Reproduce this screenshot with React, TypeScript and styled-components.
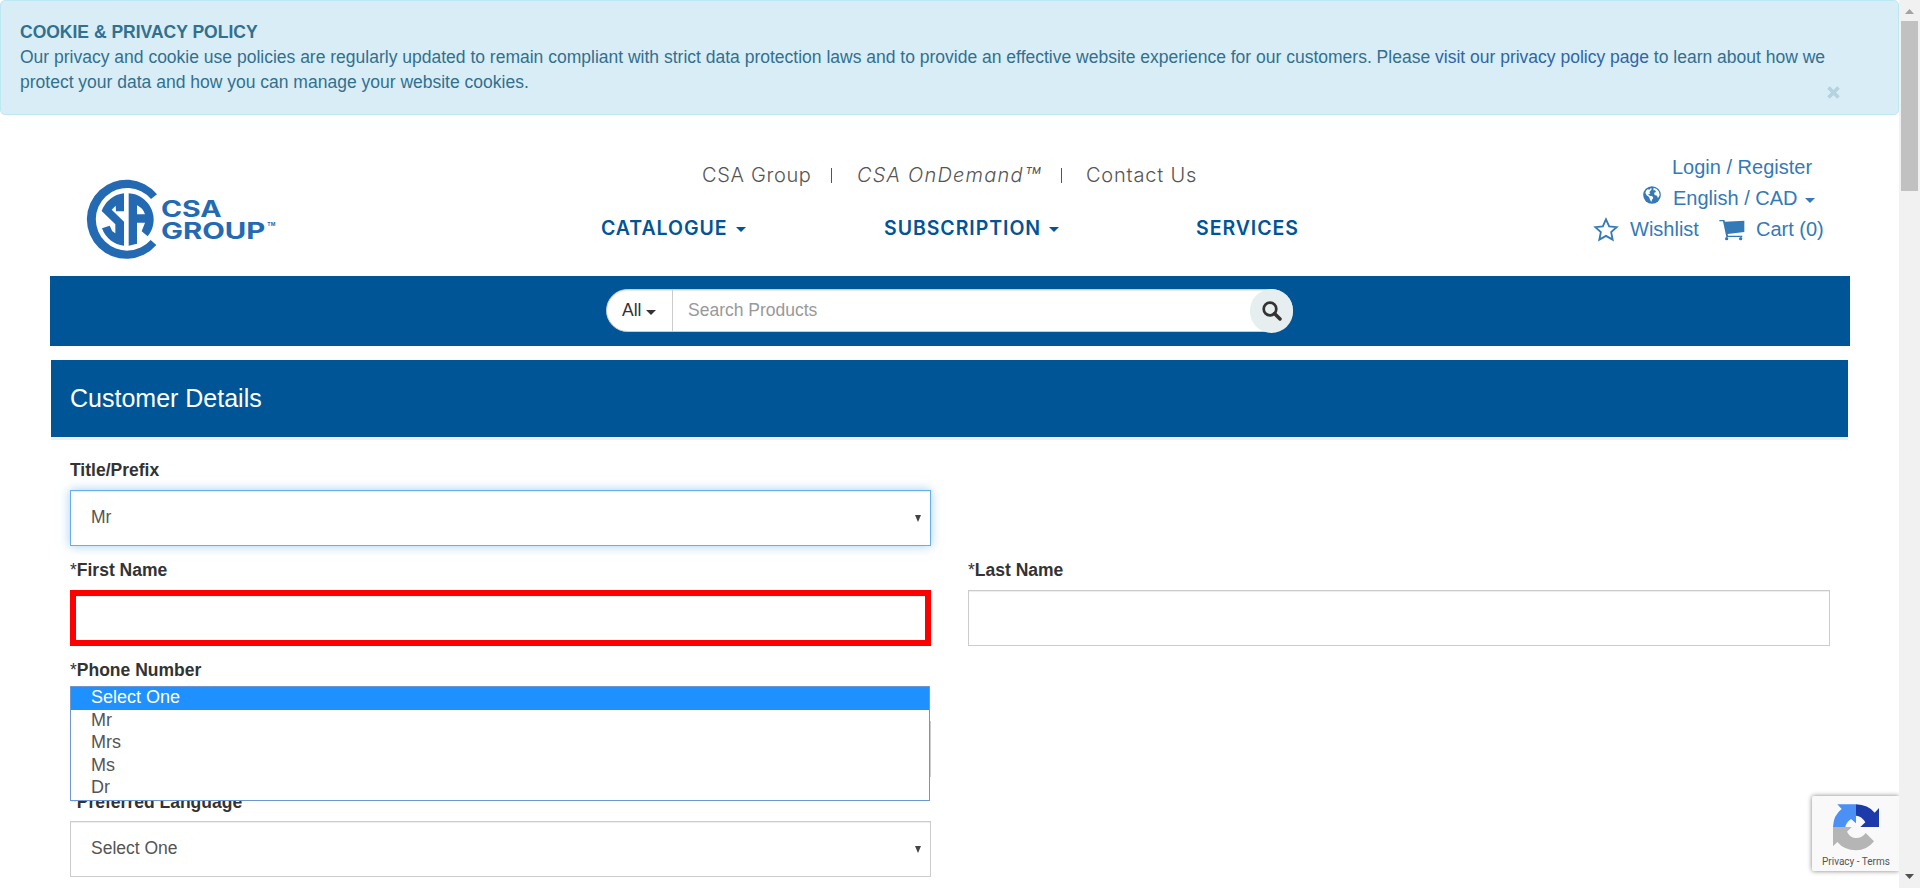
import React from "react";
import styled, { createGlobalStyle } from "styled-components";

const NAVY = "#005596";
const LINK = "#337ab7";

const Global = createGlobalStyle`
  * { box-sizing: border-box; }
  html, body { margin: 0; padding: 0; background: #fff; overflow: hidden; }
  body { font-family: "Liberation Sans", Arial, sans-serif; font-size: 17.5px; line-height: 25px; color: #333; }
`;

const Screen = styled.div`
  display: flex;
  width: 1920px;
  height: 888px;
  overflow: hidden;
  position: relative;
`;
const Page = styled.div`
  width: 1899px;
  display: flex;
  flex-direction: column;
`;

const Notice = styled.section`
  height: 115px;
  flex: none;
  padding: 19px 19px;
  border: 1px solid #bce8f1;
  border-radius: 5px;
  background: #d9edf7;
  color: #31708f;
  position: relative;
  white-space: nowrap;
`;
const NoticeTitle = styled.div`
  font-weight: bold;
`;
const NoticeLine = styled.div``;
const NoticeLink = styled.a`
  color: #2f66a5;
`;
const Close = styled.svg`
  position: absolute;
  right: 58px;
  top: 85px;
`;

const Header = styled.header`
  height: 161px;
  flex: none;
  display: flex;
  padding-left: 86px;
`;
const LogoBox = styled.div`
  width: 515px;
  padding-top: 64px;
`;
const Middle = styled.nav`
  width: 760px;
`;
const TopLinks = styled.div`
  display: flex;
  align-items: center;
  height: 30px;
  margin-top: 45px;
  padding-left: 101px;
  font-family: Inter, sans-serif;
  font-weight: 300;
  font-size: 20px;
  color: #555;
  white-space: nowrap;
`;
const TopLink = styled.a<{ $w: number; $ls?: number; $italic?: boolean }>`
  width: ${(p) => p.$w}px;
  letter-spacing: ${(p) => p.$ls ?? 0}px;
  font-style: ${(p) => (p.$italic ? "italic" : "normal")};
`;
const Trademark = styled.span`
  font-size: 27px;
  line-height: 20px;
  letter-spacing: 0;
  vertical-align: -5px;
`;
const Divider = styled.span<{ $after: number }>`
  width: 1px;
  height: 15px;
  background: #555;
  margin-right: ${(p) => p.$after}px;
`;
const MainLinks = styled.div`
  display: flex;
  height: 30px;
  align-items: center;
  margin-top: 23px;
  font-family: Inter, sans-serif;
  font-weight: 600;
  font-size: 19.5px;
  color: ${NAVY};
  white-space: nowrap;
`;
const MainLink = styled.a<{ $w: number; $ls?: number }>`
  width: ${(p) => p.$w}px;
  letter-spacing: ${(p) => p.$ls ?? 0}px;
  display: flex;
  align-items: center;
`;
const Caret = styled.i<{ $gap?: number; $drop?: number }>`
  display: inline-block;
  width: 0;
  height: 0;
  border: 5px solid transparent;
  border-top-color: currentColor;
  border-bottom: 0;
  margin-left: ${(p) => p.$gap ?? 8}px;
  margin-top: ${(p) => p.$drop ?? 3}px;
`;

const Account = styled.div`
  flex: 1;
  font-size: 20px;
  line-height: 31px;
  color: ${LINK};
  padding-top: 37px;
  white-space: nowrap;
`;
const AccountRow = styled.div<{ $x: number }>`
  display: flex;
  align-items: center;
  height: 31px;
  padding-left: ${(p) => p.$x}px;
`;
const AccountText = styled.span<{ $left?: number; $w?: number }>`
  margin-left: ${(p) => p.$left ?? 0}px;
  width: ${(p) => (p.$w ? `${p.$w}px` : "auto")};
`;
const GlobeSvg = styled.svg`
  margin-bottom: 8px;
`;

const SearchBar = styled.div`
  height: 70px;
  flex: none;
  width: 1800px;
  margin-left: 50px;
  padding: 13px 0 0 556px;
  background: ${NAVY};
`;
const SearchGroup = styled.div`
  display: flex;
  width: 687px;
  height: 43px;
  border-radius: 22px;
  background: #fff;
  border: 1px solid #ccc;
  box-shadow: inset 0 1px 1px rgba(0, 0, 0, 0.08);
`;
const SearchScope = styled.div`
  width: 65px;
  padding-left: 15px;
  display: flex;
  align-items: center;
  height: 41px;
`;
const SearchField = styled.div`
  flex: 1;
  border-left: 1px solid #ccc;
  padding: 8px 0 0 15px;
  color: #999;
`;
const SearchButton = styled.div`
  width: 43px;
  height: 44px;
  margin: -1px -1px 0 0;
  border-radius: 22px;
  background: #e7eef0;
  display: flex;
  align-items: center;
  justify-content: center;
`;

const Panel = styled.main`
  width: 1797px;
  margin: 14px 0 0 51px;
`;
const PanelTitle = styled.h3`
  margin: 0;
  height: 80px;
  background: ${NAVY};
  border-bottom: 3px solid #eee;
  color: #fff;
  font-weight: normal;
  font-size: 25px;
  line-height: 28px;
  padding: 24px 0 0 19px;
`;
const Form = styled.div`
  padding: 18px 0 0 19px;
`;
const Row = styled.div<{ $h: number }>`
  display: flex;
  gap: 37px;
  height: ${(p) => p.$h}px;
`;
const Field = styled.div<{ $gap?: number; $w?: number }>`
  width: ${(p) => p.$w ?? 861}px;
  display: grid;
  grid-template-rows: 25px 56px;
  row-gap: ${(p) => p.$gap ?? 7}px;
  align-content: start;
`;
const Label = styled.label`
  font-weight: bold;
  color: #333;
`;
const Star = styled.span`
  font-weight: normal;
`;
const Control = styled.div<{ $state?: "focus" | "error" }>`
  display: flex;
  align-items: center;
  justify-content: space-between;
  padding: 0 9px 2px 20px;
  background: #fff;
  color: #555;
  border: ${(p) =>
    p.$state === "error" ? "6px solid #f00" : p.$state === "focus" ? "1px solid #66afe9" : "1px solid #ccc"};
  box-shadow: inset 0 1px 1px rgba(0, 0, 0, 0.075)${(p) =>
    p.$state === "focus" ? ", 0 0 10px rgba(102, 175, 233, 0.6)" : ""};
`;
const Arrow = styled.i`
  border: 3.5px solid transparent;
  border-top: 7px solid #444;
  border-bottom: 0;
  margin-top: 3px;
`;
const Menu = styled.ul`
  position: absolute;
  left: 70px;
  top: 686px;
  width: 860px;
  height: 115px;
  margin: 0;
  padding: 0;
  list-style: none;
  border: 1px solid #6f96d1;
  background: #fff;
  color: #555;
  font-size: 18px;
`;
const Option = styled.li<{ $active?: boolean }>`
  height: 22.5px;
  line-height: 21px;
  padding-left: 20px;
  background: ${(p) => (p.$active ? "#1e90ff" : "transparent")};
  color: ${(p) => (p.$active ? "#fff" : "inherit")};
`;

const Captcha = styled.aside`
  position: absolute;
  left: 1812px;
  top: 796px;
  width: 87px;
  height: 75px;
  background: #f9f9f9;
  border-radius: 2px 0 0 2px;
  box-shadow: 0 0 5px gray;
  clip-path: inset(-8px 0 -8px -8px);
  font: 10px/12px Roboto, sans-serif;
  color: #555;
  white-space: nowrap;
`;
const CaptchaLogo = styled.svg`
  display: block;
  margin: 7px 0 0 20px;
`;
const CaptchaText = styled.div`
  padding: 5px 0 0 10px;
`;

const Scrollbar = styled.div`
  width: 21px;
  background: #f1f1f1;
  display: flex;
  flex-direction: column;
  align-items: center;
  padding: 9px 0;
  z-index: 1;
`;
const Thumb = styled.div`
  width: 17px;
  height: 170px;
  margin: 7px 0 auto;
  background: #c1c1c1;
`;
const ScrollArrow = styled.svg`
  display: block;
`;

const Logo = () => (
  <svg width="192" height="82" viewBox="78 57 576 246" fill="#246ab3">
    <path d="M291 103 A118.500 118.500 0 1 0 289 255 L272 240 A94 94 0 1 1 273 117 Z" />
    <path d="M192 100 A79 79 0 0 0 125 153 L166 193 L166 220 L157 214 L149 197 L126 205 A79 79 0 0 0 192 257 L192 185 L155 149 L167 137 L168 154 L192 154 Z" />
    <path d="M206 100 A79 79 0 0 1 263 229 L245 214 L255 188 L231 188 L231 251 L206 257 Z M231 136 L231 163 L255 163 Q250 145 231 136 Z" fillRule="evenodd" />
    <g fontFamily="Inter, sans-serif" fontWeight="700">
      <text x="303" y="171" fontSize="67" textLength="182" lengthAdjust="spacingAndGlyphs">CSA</text>
      <text x="303" y="236" fontSize="67" textLength="313" lengthAdjust="spacingAndGlyphs">GROUP</text>
      <text x="622" y="198" fontSize="15" textLength="24" lengthAdjust="spacingAndGlyphs">TM</text>
    </g>
  </svg>
);

const Globe = () => (
  <GlobeSvg width="18" height="18" viewBox="0 0 54 54">
    <circle cx="27" cy="27" r="26.500" fill={LINK} />
    <path fill="#fff" d="M9 14 L15 9 L18 12 L23 7 L27 8 L24 13 L19 18 L22 23 L15 24 L20 29 L28 31 L31 36 L27 41 L25 48 L21 41 L18 33 L11 28 L7 21 Z M32 5 L41 9 L48 17 L50 27 L45 37 L42 29 L35 27 L33 21 L39 17 L36 13 L31 13 Z" />
  </GlobeSvg>
);
const StarIcon = () => (
  <svg width="26" height="25" viewBox="0 0 78 75" fill="none" stroke={LINK} strokeWidth="5.500">
    <path d="M39 7 L48.500 28 L71 30.500 L54.500 45.500 L59 68 L39 56.500 L19 68 L23.500 45.500 L7 30.500 L29.500 28 Z" />
  </svg>
);
const CartIcon = () => (
  <svg width="26" height="22" viewBox="0 0 78 66" fill={LINK}>
    <path d="M1 3 H16 L18 8 L76 5 V39 L26 45 L27 50 H70 V54 H22 L12 7 H1 Z" />
    <circle cx="23" cy="59" r="5" />
    <circle cx="65" cy="59" r="5" />
  </svg>
);

type FieldProps = {
  label: string;
  required?: boolean;
  value?: string;
  select?: boolean;
  state?: "focus" | "error";
  gap?: number;
  width?: number;
};
const FormField = ({ label, required, value, select, state, gap, width }: FieldProps) => (
  <Field $gap={gap} $w={width}>
    <Label>
      {required && <Star>*</Star>}
      {label}
    </Label>
    <Control $state={state}>
      <span>{value}</span>
      {select && <Arrow />}
    </Control>
  </Field>
);

export default function App() {
  return (
    <Screen>
      <Global />
      <Page>
        <Notice>
          <NoticeTitle>COOKIE &amp; PRIVACY POLICY</NoticeTitle>
          <NoticeLine>
            Our privacy and cookie use policies are regularly updated to remain compliant with strict data protection laws and to
            provide an effective website experience for our customers. Please{" "}
            <NoticeLink>visit our privacy policy page</NoticeLink> to learn about how we
          </NoticeLine>
          <NoticeLine>protect your data and how you can manage your website cookies.</NoticeLine>
          <Close width="13" height="13" viewBox="0 0 13 13" stroke="#b5d2e0" strokeWidth="3.600">
            <path d="M1.500 1.500 L11.500 11.500 M11.500 1.500 L1.500 11.500" />
          </Close>
        </Notice>

        <Header>
          <LogoBox>
            <Logo />
          </LogoBox>
          <Middle>
            <TopLinks>
              <TopLink $w={129} $ls={0.65}>CSA Group</TopLink>
              <Divider $after={25} />
              <TopLink $w={204} $ls={1.2} $italic>
                CSA OnDemand<Trademark>™</Trademark>
              </TopLink>
              <Divider $after={24} />
              <TopLink $w={121} $ls={0.8}>Contact Us</TopLink>
            </TopLinks>
            <MainLinks>
              <MainLink $w={283} $ls={0.95}>CATALOGUE<Caret /></MainLink>
              <MainLink $w={312} $ls={0.95}>SUBSCRIPTION<Caret /></MainLink>
              <MainLink $w={120} $ls={0.95}>SERVICES</MainLink>
            </MainLinks>
          </Middle>
          <Account>
            <AccountRow $x={311}>
              <AccountText>Login / Register</AccountText>
            </AccountRow>
            <AccountRow $x={282}>
              <Globe />
              <AccountText $left={12}>English / CAD</AccountText>
              <Caret $gap={7} />
            </AccountRow>
            <AccountRow $x={232}>
              <StarIcon />
              <AccountText $left={11} $w={89}>Wishlist</AccountText>
              <CartIcon />
              <AccountText $left={11}>Cart (0)</AccountText>
            </AccountRow>
          </Account>
        </Header>

        <SearchBar>
          <SearchGroup>
            <SearchScope>
              All
              <Caret $gap={5} $drop={3} />
            </SearchScope>
            <SearchField>Search Products</SearchField>
            <SearchButton>
              <svg width="20" height="20" viewBox="0 0 20 20" fill="none" stroke="#333">
                <circle cx="8" cy="8" r="6.300" strokeWidth="2.700" />
                <path d="M12.500 12.500 L18 18" strokeWidth="3.500" strokeLinecap="round" />
              </svg>
            </SearchButton>
          </SearchGroup>
        </SearchBar>

        <Panel>
          <PanelTitle>Customer Details</PanelTitle>
          <Form>
            <Row $h={100}>
              <FormField label="Title/Prefix" value="Mr" select state="focus" />
            </Row>
            <Row $h={100}>
              <FormField label="First Name" required state="error" />
              <FormField label="Last Name" required width={862} />
            </Row>
            <Row $h={132}>
              <FormField label="Phone Number" required gap={38} />
            </Row>
            <Row $h={100}>
              <FormField label="Preferred Language" required value="Select One" select gap={6} />
            </Row>
          </Form>
        </Panel>
      </Page>

      <Menu>
        <Option $active>Select One</Option>
        <Option>Mr</Option>
        <Option>Mrs</Option>
        <Option>Ms</Option>
        <Option>Dr</Option>
      </Menu>

      <Captcha>
        <CaptchaLogo width="48" height="48" viewBox="156 69 144 144">
          <path fill="#4a90f5" d="M172 73 H228 V130 L213 117 Q199 126 196 141 H159 Q160 106 185 87 Z" />
          <path fill="#1c3aa9" d="M228 73 Q264 74 284 98 L297 84 V141 H241 L256 127 Q245 108 228 107 Z" />
          <path fill="#b5b5b5" d="M159 141 H215 L201 155 Q211 174 228 174 Q247 174 257 159 L282 184 Q261 211 228 211 Q192 210 172 186 L159 199 Z" />
        </CaptchaLogo>
        <CaptchaText>Privacy - Terms</CaptchaText>
      </Captcha>

      <Scrollbar>
        <ScrollArrow width="9" height="5" viewBox="0 0 9 5" fill="#a3a3a3">
          <path d="M0 5 L4.500 0 L9 5 Z" />
        </ScrollArrow>
        <Thumb />
        <ScrollArrow width="9" height="5" viewBox="0 0 9 5" fill="#505050">
          <path d="M0 0 L4.500 5 L9 0 Z" />
        </ScrollArrow>
      </Scrollbar>
    </Screen>
  );
}
